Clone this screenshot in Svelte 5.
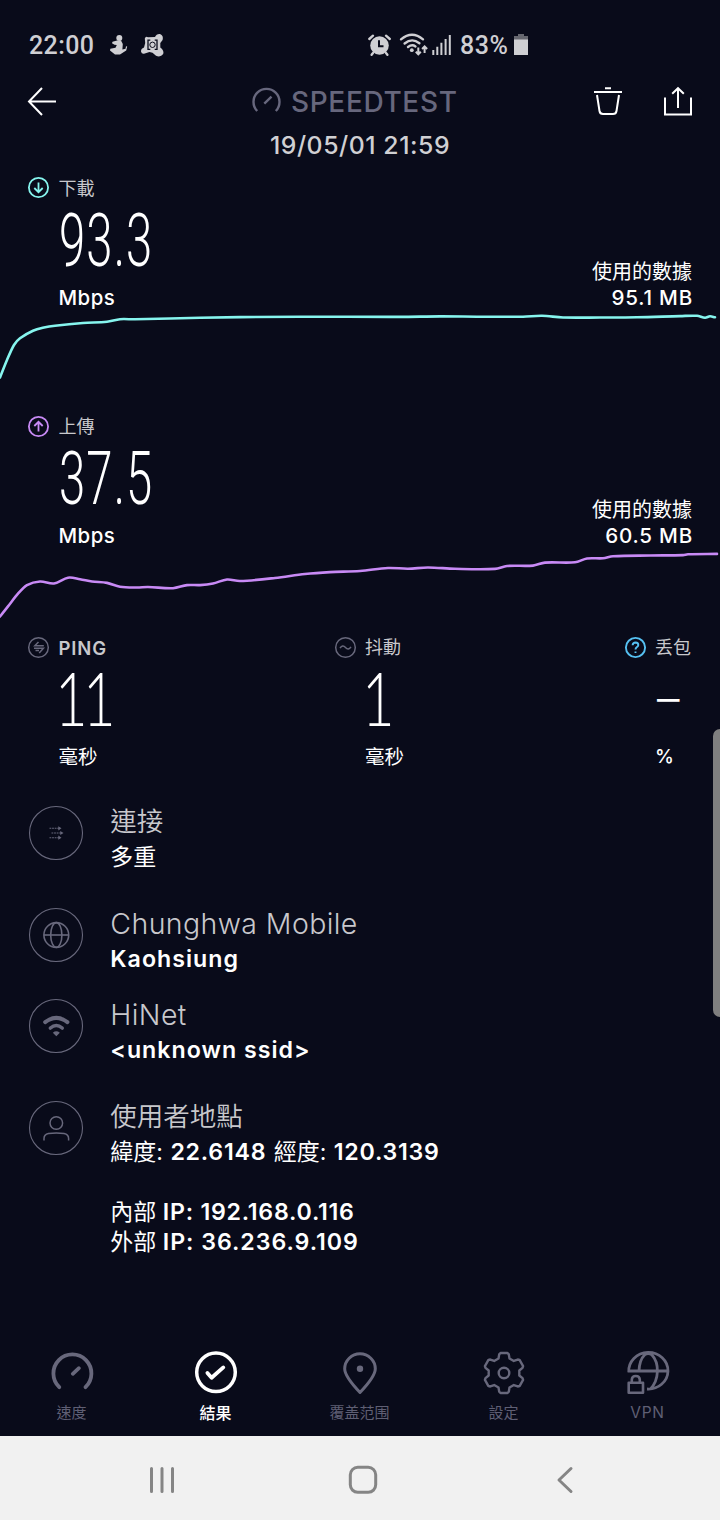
<script>
  const smooth = (pts) => {
    let d = `M${pts[0][0]} ${pts[0][1]}`;
    for (let i = 0; i < pts.length - 1; i++) {
      const a = pts[i - 1] ?? pts[i];
      const b = pts[i];
      const c = pts[i + 1];
      const e = pts[i + 2] ?? c;
      const dx = (c[0] - b[0]) / 3;
      const s1 = (c[1] - a[1]) / (c[0] - a[0]);
      const s2 = (e[1] - b[1]) / (e[0] - b[0]);
      d += `C${b[0] + dx} ${b[1] + dx * s1} ${c[0] - dx} ${c[1] - dx * s2} ${c[0]} ${c[1]}`;
    }
    return d;
  };

  const transfers = [
    {
      label: '下載', value: '93.3', data: '95.1 MB', color: '#86f5ee', arrow: 'M10.5 5.5v9.5M6.3 11l4.2 4.2 4.2-4.2',
      points: [[0, 63.5], [7, 46], [14, 31], [20, 24.3], [33, 16.7], [44, 13.5], [55, 11.7], [83, 9], [107, 7.7], [120, 5.2], [135, 5.3], [200, 3.7], [240, 3.1], [300, 2.7], [400, 2.9], [440, 2.4], [480, 2.7], [523, 2.7], [542, 1.8], [563, 3.5], [600, 3.5], [637, 3.3], [680, 2.1], [697, 1.8], [705, 3.7], [710, 2.3], [715, 3.3]]
    },
    {
      label: '上傳', value: '37.5', data: '60.5 MB', color: '#c88af5', arrow: 'M10.5 15.5V6M6.3 10l4.2-4.2 4.2 4.2',
      points: [[0, 64.5], [8, 54.4], [18, 41.7], [27, 33.1], [40, 29.5], [54, 31.5], [68, 25.7], [80, 27.2], [92, 29.5], [107, 30.9], [120, 34.8], [137, 35.5], [148, 35], [173, 36.2], [187, 33.1], [200, 33.1], [213, 31.5], [227, 27.5], [240, 29], [275, 26], [305, 22], [330, 20.1], [360, 19], [388, 16], [408, 16.7], [428, 15.5], [455, 16.8], [495, 16.9], [507, 14], [533, 13.6], [545, 10.6], [575, 10.3], [587, 6.5], [603, 6.3], [613, 4.3], [650, 3.5], [683, 3.1], [688, 2.3], [717, 1.9]]
    }
  ];

  const tooth = [[-5.5, -14.5], [-4.8, -18.6], [-3.5, -20], [3.5, -20], [4.8, -18.6], [5.5, -14.5]];
  const gear = 'M' + [0, 60, 120, 180, 240, 300].flatMap((deg) => {
    const t = (deg * Math.PI) / 180;
    return tooth.map(([x, y]) =>
      `${(x * Math.cos(t) - y * Math.sin(t)).toFixed(2)} ${(x * Math.sin(t) + y * Math.cos(t)).toFixed(2)}`);
  }).join('L') + 'Z';

  const tabs = [
    { id: 'speed', label: '速度' },
    { id: 'results', label: '結果' },
    { id: 'map', label: '覆盖范围' },
    { id: 'settings', label: '設定' },
    { id: 'vpn', label: 'VPN' }
  ];
</script>

<div class="screen">
  <div class="status">
    <span class="clock">22:00</span>
    <svg class="buddy" width="20" height="22" viewBox="0 0 20 22">
      <circle cx="10.3" cy="4" r="3" />
      <path d="M8 6.5 12 6.5 13.8 10 13.4 15.5 16.5 14.8 17 12.2 18.2 12.5 17.2 16.5 11 20.5H6L1 16.5 1.3 14.8 6.5 13.8 7.8 11 5.5 10.8 3 9.3 3.5 7.8Z" />
    </svg>
    <svg class="blob" width="24" height="24" viewBox="0 0 24 24">
      <path d="M1 18.5Q.8 15.6 4 14.5L5.2 10 4.8 5.5Q5.5 3 8 4.2L15 4Q16.5 .6 20 1 23.8 2.6 22.6 7L20.3 10 20.3 14.5Q24.4 17.5 23.2 21 20.5 24.8 16 22.8L12.5 19.8 9.5 19 4 20.7Q1.5 21 1 18.5Z" />
      <path class="ring" d="M10.3 7.2H8V16.4H10.3M14.7 7.2H17V16.4H14.7" />
      <circle cx="12.5" cy="11.8" r="2.7" class="eye" />
    </svg>
    <svg class="alarm" width="24" height="24" viewBox="0 0 24 24">
      <circle cx="11.5" cy="12.5" r="9.3" />
      <path class="pen" d="M1.3 6 5 2.7M21.8 6 18 2.7M5 20 3.6 21.7M18 20 19.4 21.7" />
      <path class="cut" d="M11 7.2V13.2H15.5" />
    </svg>
    <svg class="wifi" width="28" height="24" viewBox="0 0 28 24">
      <path class="pen" d="M1 6.3Q12 -2.8 23 6.3M4.6 10.5Q12 4.4 19.4 10.2M8 14Q12 11 15.5 13.4" />
      <circle cx="11.8" cy="17.2" r="1.9" />
      <path class="pen thin" d="M18.3 14.5V21M15.8 18.7 18.3 21.3 20.8 18.7M24.6 20V13.8M22.1 16 24.6 13.4 27.1 16" />
    </svg>
    <svg class="signal" width="20" height="22" viewBox="0 0 20 22">
      <path class="pen thin" d="M1.3 21V16M5.3 21V12.7M9.4 21V8.8M13.6 21V4.9M17.8 21V1" />
    </svg>
    <span class="level">83%</span>
    <svg class="battery" width="14" height="22" viewBox="0 0 14 22">
      <path d="M4 0H10V2H14V6.5H0V2H4Z" fill="#66676f" />
      <path d="M0 5.5H14V21H0Z" />
    </svg>
  </div>

  <header>
    <svg width="28" height="29" viewBox="0 0 28 29" class="line"><path d="M28 14.5H1M14 1 1 14.5 14 28" /></svg>
    <div class="brand">
      <svg width="29" height="25" viewBox="0 0 29 25"><path d="M5.2 23A13 13 0 1 1 23.8 23M12.3 15.6 19.5 8.6" /></svg>
      <span>SPEEDTEST</span>
    </div>
    <svg class="line trash" width="28" height="30" viewBox="0 0 28 30"><path d="M0 6H28M11 2.2H17M3 9 5.5 25Q6 28 9 28H19Q22 28 22.5 25L25 9" /></svg>
    <svg class="line share" width="28" height="30" viewBox="0 0 28 30"><path d="M1 11.5V28.5H27V11.5M14 22V3M8.2 7.7 14 2.2 19.8 7.7" /></svg>
  </header>
  <div class="date">19/05/01 21:59</div>

  {#each transfers as t}
    <section class="transfer">
      <div class="top">
        <div>
          <div class="label">
            <svg width="21" height="21" viewBox="0 0 21 21" stroke={t.color}><circle cx="10.5" cy="10.5" r="9.6" /><path d={t.arrow} /></svg>
            <span>{t.label}</span>
          </div>
          <div class="value"><span>{t.value}</span></div>
          <div class="unit">Mbps</div>
        </div>
        <div class="used"><div>使用的數據</div><div class="amount">{t.data}</div></div>
      </div>
      <svg class="chart" width="720" height="83" viewBox="0 0 720 83" stroke={t.color}><path d={smooth(t.points)} /></svg>
    </section>
  {/each}

  <section class="metrics">
    <div>
      <div class="label">
        <svg width="21" height="21" viewBox="0 0 21 21" stroke="#68687c"><circle cx="10.5" cy="10.5" r="9.8" /><path d="M15.8 8.8H6.8L10.5 5M6 11.2H15.4L11.2 16M7.5 13.5H11" /></svg>
        <span class="ping">PING</span>
      </div>
      <div class="value one"><span>11</span></div>
      <div class="unit cjk">毫秒</div>
    </div>
    <div>
      <div class="label">
        <svg width="21" height="21" viewBox="0 0 21 21" stroke="#68687c"><circle cx="10.5" cy="10.5" r="9.8" /><path d="M5 11.2Q7.6 7.3 10.5 10.5T16 9.9" /></svg>
        <span>抖動</span>
      </div>
      <div class="value one"><span>1</span></div>
      <div class="unit cjk">毫秒</div>
    </div>
    <div>
      <div class="label">
        <svg width="21" height="21" viewBox="0 0 21 21" stroke="#56c1f2" class="help"><circle cx="10.5" cy="10.5" r="9.6" /><path d="M7.6 8.3Q7.8 5.5 10.6 5.5 13.4 5.7 13.3 8.1 13.2 9.3 11.7 10.2 10.5 11 10.5 12.6M10.5 14.4V16" /></svg>
        <span>丢包</span>
      </div>
      <div class="value dash"><span>–</span></div>
      <div class="unit pct">%</div>
    </div>
  </section>

  <section class="details">
    <div class="row">
      <svg width="54" height="54" viewBox="-27 -27 54 54"><circle r="26.5" />
        <path stroke-dasharray="1.8 .8" d="M-6.5 -4.7H3M-4.5 0H5M-6.5 4.7H3" />
        <path class="fill" d="M2.3 -6.8 5.5 -4.7 2.3 -2.6ZM4.3 -2.1 7.5 0 4.3 2.1ZM2.3 2.6 5.5 4.7 2.3 6.8Z" /></svg>
      <div><div class="name cjkname">連接</div><div class="sub">多重</div></div>
    </div>
    <div class="row">
      <svg width="54" height="54" viewBox="-27 -27 54 54"><circle r="26.5" />
        <g stroke-width="1.6"><circle cx=".3" r="12.4" /><ellipse cx=".3" rx="5.6" ry="12.4" /><path d="M-12.1 0H12.7" /></g></svg>
      <div><div class="name isp">Chunghwa Mobile</div><div class="sub city">Kaohsiung</div></div>
    </div>
    <div class="row">
      <svg width="54" height="54" viewBox="-27 -27 54 54"><circle r="26.5" />
        <path stroke-width="4" stroke-linecap="round" d="M-10.8 -3.9Q.3 -12.3 11.4 -3.9" /><path stroke-width="3.6" stroke-linecap="round" d="M-5.6 2Q.3 -3 6.2 2" />
        <path class="fill" d="M-3.2 6.7Q.3 3.8 3.8 6.7L.3 10.2Z" /></svg>
      <div><div class="name isp">HiNet</div><div class="sub ssid">&lt;unknown ssid&gt;</div></div>
    </div>
    <div class="row">
      <svg width="54" height="54" viewBox="-27 -27 54 54"><circle r="26.5" />
        <g stroke-width="1.5"><circle cx=".3" cy="-5" r="6.3" /><path d="M-12 12.5V10.5Q-12 6.5 -7.5 5.6 .3 4.2 8.1 5.6 12.6 6.5 12.6 10.5V12.5" /></g></svg>
      <div>
        <div class="name cjkname">使用者地點</div>
        <div class="sub coords"><i>緯度:</i> <b>22.6148</b> <i>經度:</i> <b>120.3139</b></div>
        <div class="sub gap"><i>內部</i> <b>IP: 192.168.0.116</b></div>
        <div class="sub flush"><i>外部</i> <b class="outer">IP: 36.236.9.109</b></div>
      </div>
    </div>
  </section>

  <nav class="tabs">
    {#each tabs as tab}
      <div class="tab" class:active={tab.id === 'results'}>
        <svg width="46" height="46" viewBox="-23 -23 46 46">
          {#if tab.id === 'speed'}
            <path stroke-width="3.8" d="M-12.7 14.2A19 19 0 1 1 13.5 14.2M.8 .8 6.9 -4.8" />
          {:else if tab.id === 'results'}
            <circle cy="-.7" r="19.3" stroke-width="3.5" /><path stroke-width="3.8" d="M-8.6 0 -4.4 4.7 7.3 -5.6" />
          {:else if tab.id === 'map'}
            <path stroke-width="3" d="M0 19.5Q-15.3 3.5 -15.3 -4.2A15.3 15 0 0 1 15.3 -4.2Q15.3 3.5 0 19.5Z" /><circle cy="-4.2" r="3.2" class="fill" />
          {:else if tab.id === 'settings'}
            <path stroke-width="2.4" d={gear} /><circle r="5.3" stroke-width="2.4" />
          {:else}
            <path stroke-width="2.8" stroke-linecap="butt" d="M-19.2 -1A19.6 18.3 0 1 1 -1 16M-20.4 -2H19.6M-9 -2Q-8.6 -13 -3.5 -18Q0 -21 4 -18Q9.6 -12 9.4 -1.5 9 9 2.5 16" />
            <path stroke-width="2.6" d="M-19.3 9.7H-5V19.7H-19.3ZM-16.2 9.5V6.6Q-16 3 -12.2 3T-8.2 6.6V9.5" />
          {/if}
        </svg>
        <span>{tab.label}</span>
      </div>
    {/each}
  </nav>

  <div class="system">
    <svg width="28" height="28" viewBox="0 0 28 28"><path stroke-width="3" stroke-linecap="round" d="M3.5 2.5V25.5M14 2.5V25.5M24.5 2.5V25.5" /></svg>
    <svg width="30" height="30" viewBox="0 0 30 30"><rect x="2.3" y="2.3" width="25.4" height="25" rx="7.5" stroke-width="3" /></svg>
    <svg width="28" height="28" viewBox="0 0 28 28"><path stroke-width="3" stroke-linecap="round" stroke-linejoin="round" d="M21 2.5 9 14 21 25.5" /></svg>
  </div>
  <div class="thumb"></div>
</div>

<style>
  :global(body) { margin: 0; background: #090b1a; }
  .screen {
    position: relative; width: 720px; height: 1520px; overflow: hidden;
    display: flex; flex-direction: column; background: #090b1a; color: #fff;
    font-family: Inter, "Noto Sans CJK TC", sans-serif; white-space: nowrap;
  }
  svg { display: block; flex: none; fill: none; overflow: visible; }

  .status {
    box-sizing: border-box; height: 72px; padding: 20px 0 0 29px; display: flex; align-items: center;
    font: 500 25px/30px Roboto, sans-serif; color: #cfcfd3;
  }
  .status svg { fill: #cfcfd3; margin-top: -2px; }
  .status .pen { fill: none; stroke: #cfcfd3; stroke-width: 2.4; stroke-linecap: round; }
  .status .thin { stroke-width: 2; stroke-linecap: butt; }
  .status .cut { fill: none; stroke: #090b1a; stroke-width: 2; }
  .status .ring { fill: none; stroke: #090b1a; stroke-width: 1.3; }
  .status .eye { stroke: #090b1a; stroke-width: 1; }
  .clock { width: 66px; letter-spacing: .4px; }
  .buddy { margin-left: 14px; }
  .blob { margin-left: 11px; }
  .alarm { margin-left: 204px; }
  .wifi { margin-left: 8px; }
  .signal { margin-left: 4px; }
  .level { margin-left: 8px; width: 49px; letter-spacing: .5px; }
  .battery { margin-left: 5px; }

  header { height: 58px; display: flex; align-items: center; padding: 0 28px; }
  .line { stroke: #fff; stroke-width: 2; }
  .brand { display: flex; align-items: center; gap: 10px; margin-left: 196px; color: #67677d; font-weight: 500; font-size: 28px; line-height: 30px; }
  .brand svg { stroke: #67677d; stroke-width: 2.4; margin-top: -1px; }
  .brand span { letter-spacing: .65px; padding-top: 2px; }
  .trash { margin-left: auto; }
  .share { margin-left: 42px; }
  .date { height: 28px; line-height: 30px; text-align: center; font-size: 24.8px; font-weight: 500; letter-spacing: .55px; color: #d0d0d3; }

  .transfer { height: 238.5px; padding-top: 17.5px; box-sizing: border-box; }
  .top { height: 138px; display: flex; justify-content: space-between; align-items: flex-end; padding: 0 28px; }
  .label { height: 24px; display: flex; align-items: center; gap: 9.5px; color: #c8c8cc; font-size: 18px; line-height: 24px; font-weight: 400; }
  .label span { padding-top: 2px; }
  .label svg { stroke-width: 1.8; }
  .value { height: 82px; margin-left: 31px; font: 300 75px/80px Roboto, sans-serif; }
  .value span { display: inline-block; transform: scaleX(.63); transform-origin: 0 0; letter-spacing: 1.8px; }
  .value.one { font: 300 74px/78px Lato, sans-serif; margin-left: 27px; }
  .one span { transform: scaleX(.76); letter-spacing: -6.2px; }
  .unit { height: 32px; line-height: 31px; margin-left: 30.5px; font-size: 20.4px; font-weight: 500; letter-spacing: .5px; }
  .used { text-align: right; font-size: 20px; line-height: 26px; padding-bottom: 3px; }
  .amount { line-height: 25px; font-size: 20.6px; font-weight: 500; letter-spacing: .8px; margin-right: -1px; padding-bottom: 1px; }
  .chart path { stroke-width: 2.6; stroke-linecap: round; stroke-linejoin: round; }

  .metrics { display: grid; grid-template-columns: 306.5px 290px auto; padding-left: 28px; }
  .metrics .label svg { stroke-width: 1.5; }
  .metrics .label .help { stroke-width: 1.9; }
  .label .ping { font-weight: 600; font-size: 18.5px; letter-spacing: .85px; }
  .unit.cjk { font-size: 19.5px; font-weight: 400; letter-spacing: 0; line-height: 32px; }
  .value.dash { font: 300 45px/78px Inter, sans-serif; margin-left: 32.5px; }
  .dash span { transform: none; }
  .pct { font-size: 19px; }

  .details { margin-top: 31px; height: 532px; padding-left: 29px; }
  .row { display: flex; gap: 27.3px; margin-bottom: 31px; }
  .row svg { margin-top: 2px; stroke: #68687c; stroke-width: 1.1; }
  .row:nth-child(2) { margin-bottom: 20px; }
  .row .fill { fill: #68687c; stroke: none; }
  .name { height: 35px; line-height: 35px; font-size: 28px; font-weight: 300; color: #c8c8cc; }
  .isp { line-height: 36px; font-size: 28.5px; letter-spacing: .4px; }
  .name.cjkname { font-size: 26.5px; font-weight: 350; }
  .sub { height: 30px; line-height: 30px; margin: 3px 0; font-size: 23px; }
  .sub i { font-style: normal; font-weight: 400; }
  .sub b, .city, .ssid { font-weight: 600; font-size: 23.2px; letter-spacing: .75px; }
  .city, .ssid { letter-spacing: 1px; }
  .coords { word-spacing: 1px; }
  .sub .outer { letter-spacing: .95px; }
  .sub.gap { margin: 30px 0 0; }
  .sub.flush { margin: 0; }

  .tabs { height: 100px; display: grid; grid-template-columns: repeat(5, 144px); margin-left: -.5px; }
  .tab { display: flex; flex-direction: column; align-items: center; padding-top: 14px; color: #5f5f74; font-size: 15px; line-height: 24px; font-weight: 400; }
  .tab svg { stroke: #68687c; stroke-linecap: round; stroke-linejoin: round; }
  .tab .fill { fill: #68687c; stroke: none; }
  .tab span { margin-top: 5px; }
  .tab:last-child { font-size: 15.5px; letter-spacing: .7px; }
  .tab.active { color: #fff; font-size: 16px; font-weight: 500; }
  .tab.active svg { stroke: #fff; }

  .system { height: 84px; background: #f1f1f1; display: flex; align-items: center; padding-top: 4px; box-sizing: border-box; padding-left: 148px; gap: 172px; }
  .system svg { stroke: #858585; }
  .thumb { position: absolute; right: 0; top: 729px; width: 7px; height: 288px; border-radius: 7px 0 0 7px; background: #7f7f7f; }
</style>
